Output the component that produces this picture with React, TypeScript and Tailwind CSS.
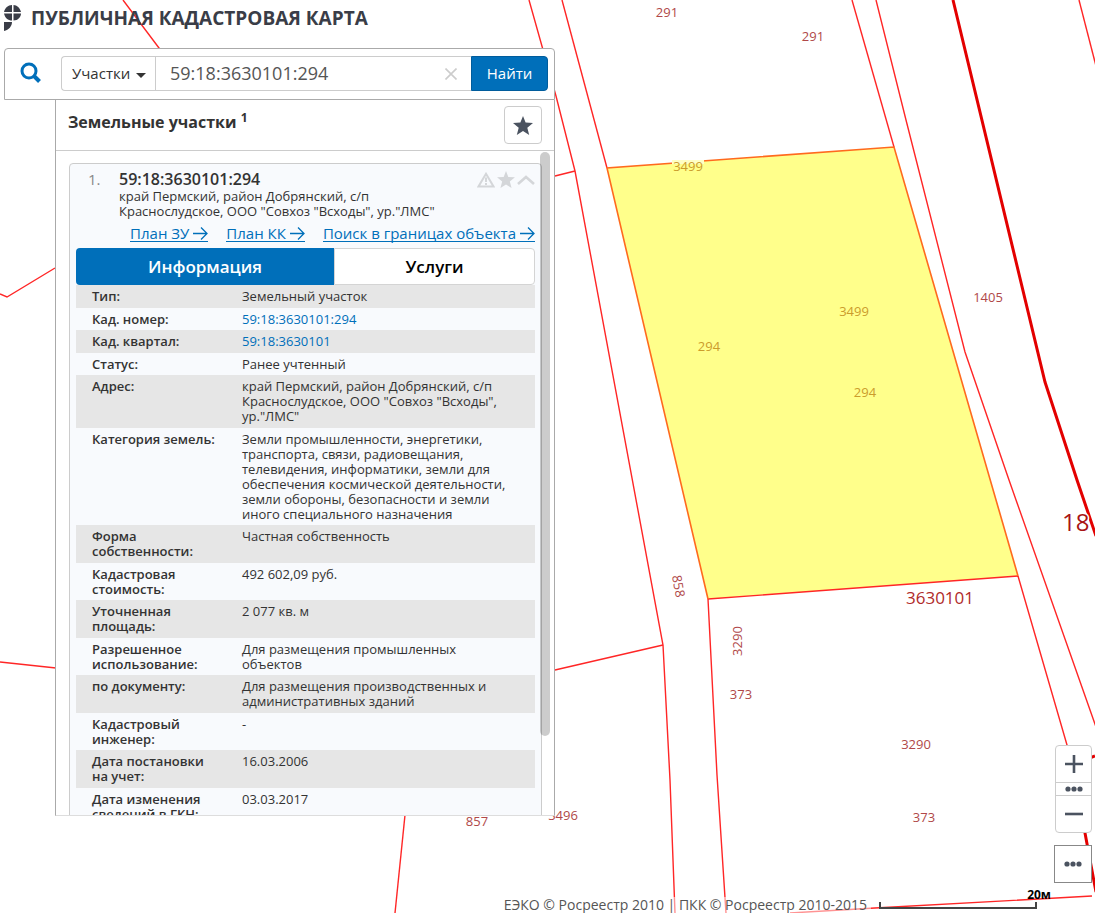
import { useState } from "react";

type MapLabel = {
  text: string;
  x: number;
  y: number;
  rotate?: number;
  selected?: boolean;
};

type Row = {
  label: string;
  value: string;
  href?: string;
};

const boundaries = [
  "M123 0 L159 48 L200 103",
  "M529 0 L556 96 L575 171 L663 645 L670 780 L675 913",
  "M555 176 L575 171",
  "M562 0 L607 168",
  "M852 0 L894 147",
  "M876 0 L906 120 L965 352 L1009 480 L1096 727",
  "M1079 0 L1096 66",
  "M708 599 L717 775 L726 913",
  "M1018 576 L1067 745 L1085 812",
  "M555 670 L663 645",
  "M55 268 L7 297 L0 294",
  "M0 662 L56 668",
  "M405 815 L395 913",
  "M790 913 L875 908 L1092 896",
];

const quarterBoundaries = [
  "M953 0 L1045 382 L1077 480 L1096 536",
  "M1070 766 L1095 756",
  "M1078 790 L1085 833 L1096 892",
];

const labels: MapLabel[] = [
  { text: "291", x: 667, y: 17 },
  { text: "291", x: 813, y: 41 },
  { text: "1405", x: 988, y: 302 },
  { text: "3499", x: 688, y: 171, selected: true },
  { text: "3499", x: 854, y: 316, selected: true },
  { text: "294", x: 709, y: 351, selected: true },
  { text: "294", x: 865, y: 397, selected: true },
  { text: "858", x: 674, y: 587, rotate: 80 },
  { text: "3290", x: 742, y: 641, rotate: -90 },
  { text: "373", x: 741, y: 699 },
  { text: "3290", x: 916, y: 749 },
  { text: "373", x: 924, y: 822 },
  { text: "857", x: 477, y: 826 },
  { text: "3496", x: 563, y: 820 },
];

const rows: Row[] = [
  { label: "Тип:", value: "Земельный участок" },
  { label: "Кад. номер:", value: "59:18:3630101:294", href: "#parcel" },
  { label: "Кад. квартал:", value: "59:18:3630101", href: "#quarter" },
  { label: "Статус:", value: "Ранее учтенный" },
  {
    label: "Адрес:",
    value: 'край Пермский, район Добрянский, с/п Краснослудское, ООО "Совхоз "Всходы", ур."ЛМС"',
  },
  {
    label: "Категория земель:",
    value:
      "Земли промышленности, энергетики, транспорта, связи, радиовещания, телевидения, информатики, земли для обеспечения космической деятельности, земли обороны, безопасности и земли иного специального назначения",
  },
  { label: "Форма собственности:", value: "Частная собственность" },
  { label: "Кадастровая стоимость:", value: "492 602,09 руб." },
  { label: "Уточненная площадь:", value: "2 077 кв. м" },
  { label: "Разрешенное использование:", value: "Для размещения промышленных объектов" },
  { label: "по документу:", value: "Для размещения производственных и административных зданий" },
  { label: "Кадастровый инженер:", value: "-" },
  { label: "Дата постановки на учет:", value: "16.03.2006" },
  { label: "Дата изменения сведений в ГКН:", value: "03.03.2017" },
];

function Star({ className }: { className: string }) {
  return (
    <svg aria-hidden="true" className={className} fill="currentColor" viewBox="0 0 20 19">
      <path d="M10 0 L12.6 6.6 L20 7.1 L14.3 11.7 L16.2 19 L10 15 L3.8 19 L5.7 11.7 L0 7.1 L7.4 6.6 Z" />
    </svg>
  );
}

function Dots() {
  return (
    <svg aria-hidden="true" className="h-[6px] w-[18px]" fill="#4b5360" viewBox="0 0 18 6">
      <circle cx="3" cy="3" r="2.6" />
      <circle cx="9" cy="3" r="2.6" />
      <circle cx="15" cy="3" r="2.6" />
    </svg>
  );
}

function PlanLink({ children }: { children: string }) {
  return (
    <a className="flex items-center gap-1 border-[#006fba] border-b text-[#006fba] leading-4" href="#plan">
      {children}
      <svg
        aria-hidden="true"
        className="h-[13px] w-[15px]"
        fill="none"
        stroke="currentColor"
        strokeWidth="1.3"
        viewBox="0 0 15 13"
      >
        <path d="M0 6.5 H14 M8 0.5 L14 6.5 L8 12.5" />
      </svg>
    </a>
  );
}

function CadastralMap() {
  return (
    <svg aria-label="Карта участков" className="absolute inset-0 h-full w-full" role="img">
      <polygon fill="#ffff8b" points="607,168 894,147 1018,576 708,599" />
      <g fill="none" stroke="#ff2626" strokeWidth="1.4">
        {boundaries.map((d) => (
          <path d={d} key={d} />
        ))}
        <path d="M708 599 L1018 576" />
      </g>
      <path
        d="M708 599 L607 168 L894 147 L1018 576"
        fill="none"
        stroke="#ff6a1e"
        strokeWidth="1.6"
      />
      <g fill="none" stroke="#e30000" strokeWidth="3">
        {quarterBoundaries.map((d) => (
          <path d={d} key={d} />
        ))}
      </g>
      <rect fill="#ffffc4" height="4" width="32" x="672" y="160" />
      <g fontSize="13" textAnchor="middle">
        {labels.map(({ text, x, y, rotate = 0, selected }) => (
          <text
            fill={selected ? "#cb9c2c" : "#b04848"}
            key={`${text}-${x}`}
            transform={`rotate(${rotate} ${x} ${y})`}
            x={x}
            y={y}
          >
            {text}
          </text>
        ))}
      </g>
      <text fill="#b02a2a" fontSize="17" textAnchor="middle" x="940" y="604">
        3630101
      </text>
      <text fill="#a81414" fontSize="24" paintOrder="stroke" stroke="#fff" strokeWidth="3" x="1062" y="531">
        18
      </text>
    </svg>
  );
}

function SearchBar() {
  const [query, setQuery] = useState("59:18:3630101:294");

  return (
    <form
      className="flex h-[52px] items-start rounded-t-sm border border-[#aaa] bg-white pt-[7px] pr-[6px] pl-[15px]"
      onSubmit={(e) => e.preventDefault()}
    >
      <svg
        aria-hidden="true"
        className="mt-[6px] mr-5 h-[21px] w-[21px] shrink-0"
        fill="none"
        stroke="#006fba"
        viewBox="0 0 21 21"
      >
        <circle cx="9" cy="9" r="7" strokeWidth="3" />
        <path d="M14 14 L19.5 19.5" strokeWidth="4" />
      </svg>
      <div className="flex h-[35px] min-w-0 flex-1 items-stretch rounded-l-sm border border-[#ccc] border-r-0">
        <div className="relative flex border-[#ccc] border-r">
          <select
            aria-label="Тип объекта"
            className="w-[93px] appearance-none bg-transparent pl-[10px] text-[#333] text-[15px] outline-none"
          >
            <option>Участки</option>
            <option>ОКС</option>
          </select>
          <svg
            aria-hidden="true"
            className="pointer-events-none absolute top-4 right-[9px] h-[5px] w-[10px]"
            fill="#333"
            viewBox="0 0 10 5"
          >
            <path d="M0 0 H10 L5 5 Z" />
          </svg>
        </div>
        <input
          aria-label="Кадастровый номер"
          className="min-w-0 flex-1 pl-[14px] text-[#555] text-[18px] outline-none"
          onChange={(e) => setQuery(e.target.value)}
          type="text"
          value={query}
        />
        <button aria-label="Очистить" className="px-[14px]" onClick={() => setQuery("")} type="button">
          <svg aria-hidden="true" className="h-3 w-3" stroke="#ccc" strokeWidth="1.6" viewBox="0 0 12 12">
            <path d="M0.5 0.5 L11.5 11.5 M11.5 0.5 L0.5 11.5" />
          </svg>
        </button>
      </div>
      <button
        className="h-[35px] w-[77px] rounded-r-sm border border-[#005c9c] bg-[#006fba] font-medium text-[15px] text-white"
        type="submit"
      >
        Найти
      </button>
    </form>
  );
}

function ParcelCard() {
  const [tab, setTab] = useState("info");

  return (
    <article className="rounded-t-sm border border-[#ccc] bg-[#f8fafd] px-[6px] pt-[7px]">
      <div className="flex items-start">
        <span className="w-[43px] pl-3 text-[#888] text-[15px] leading-4">1.</span>
        <div className="flex-1 pr-5 text-[13px] text-[#333] leading-[15px]">
          <h3 className="mb-[2px] font-semibold text-[16px] leading-4">59:18:3630101:294</h3>
          <p>край Пермский, район Добрянский, с/п Краснослудское, ООО "Совхоз "Всходы", ур."ЛМС"</p>
        </div>
        <div className="flex items-center gap-[2px] text-[#d4d6d9]">
          <svg
            aria-hidden="true"
            className="h-4 w-[18px]"
            fill="none"
            stroke="currentColor"
            strokeWidth="2"
            viewBox="0 0 18 16"
          >
            <path d="M9 1.8 L16.5 14.5 H1.5 Z M9 5.5 V10 M9 11 V13" />
          </svg>
          <Star className="h-[17px] w-[18px]" />
          <svg
            aria-hidden="true"
            className="h-[10px] w-[18px]"
            fill="none"
            stroke="currentColor"
            strokeWidth="2.6"
            viewBox="0 0 18 10"
          >
            <path d="M1 9 L9 2 L17 9" />
          </svg>
        </div>
      </div>

      <div className="mt-[6px] mb-[6px] flex justify-end gap-[18px] whitespace-nowrap text-[15px]">
        <PlanLink>План ЗУ</PlanLink>
        <PlanLink>План КК</PlanLink>
        <PlanLink>Поиск в границах объекта</PlanLink>
      </div>

      <div className="flex h-[37px] font-bold text-[17px]">
        <button
          className="w-[258px] rounded-l-sm bg-[#006fba] font-semibold text-white"
          onClick={() => setTab("info")}
          type="button"
        >
          Информация
        </button>
        <button
          className="flex-1 rounded-r-sm border border-[#d4d4d4] bg-white font-semibold text-black"
          onClick={() => setTab("services")}
          type="button"
        >
          Услуги
        </button>
      </div>

      {tab === "info" && (
        <table className="w-full table-fixed text-left text-[#333] text-[13px] leading-[15px]">
          <tbody>
            {rows.map((row) => (
              <tr className="group align-top odd:bg-[#e6e6e6]" key={row.label}>
                <th
                  className="w-[166px] pt-1 pr-6 pb-[3px] pl-4 font-semibold group-odd:pb-1"
                  scope="row"
                >
                  {row.label}
                </th>
                <td className="pt-1 pr-5 pb-[3px] group-odd:pb-1">
                  {row.href ? (
                    <a className="text-[#006fba]" href={row.href}>
                      {row.value}
                    </a>
                  ) : (
                    row.value
                  )}
                </td>
              </tr>
            ))}
          </tbody>
        </table>
      )}
    </article>
  );
}

function Results() {
  return (
    <section className="relative ml-[51px] flex min-h-0 flex-1 flex-col border-[#aaa] border-x border-b border-b-[#ddd] bg-white">
      <header className="flex h-[51px] shrink-0 items-center justify-between border-[#ccc] border-b pr-3 pl-3">
        <h2 className="mb-[6px] font-bold text-[#333] text-[16px]">
          Земельные участки <sup className="text-[12px]">1</sup>
        </h2>
        <button
          aria-label="Избранное"
          className="flex h-[38px] w-[38px] items-center justify-center rounded-sm border border-[#ccc] text-[#4b5360]"
          type="button"
        >
          <Star className="h-[19px] w-5" />
        </button>
      </header>
      <div className="relative min-h-0 flex-1 overflow-hidden px-3 pt-3 pl-[13px]">
        <ParcelCard />
        <div className="absolute top-px right-1 h-[88%] w-[10px] rounded-full bg-black/20" />
      </div>
    </section>
  );
}

function ZoomControls() {
  return (
    <div className="absolute right-[3px] bottom-[30px] flex flex-col items-end gap-3">
      <div className="flex w-[37px] flex-col divide-y divide-[#ccc] rounded-sm border border-[#ccc] bg-white">
        <button aria-label="Приблизить" className="flex h-[37px] items-center justify-center" type="button">
          <svg aria-hidden="true" className="h-[18px] w-[18px]" stroke="#4b5360" strokeWidth="2.6" viewBox="0 0 18 18">
            <path d="M9 0 V18 M0 9 H18" />
          </svg>
        </button>
        <button aria-label="Масштаб" className="flex h-[13px] items-center justify-center" type="button">
          <Dots />
        </button>
        <button aria-label="Отдалить" className="flex h-9 items-center justify-center" type="button">
          <svg aria-hidden="true" className="h-[18px] w-[18px]" stroke="#4b5360" strokeWidth="2.6" viewBox="0 0 18 18">
            <path d="M0 9 H18" />
          </svg>
        </button>
      </div>
      <button
        aria-label="Ещё"
        className="flex h-[38px] w-[38px] items-center justify-center border border-[#888] bg-white"
        type="button"
      >
        <Dots />
      </button>
    </div>
  );
}

export default function App() {
  return (
    <div className="relative flex h-screen flex-col overflow-hidden bg-white font-['Open_Sans','Noto_Sans',sans-serif]">
      <CadastralMap />

      <header className="relative flex h-12 shrink-0 items-start gap-[10px] pt-[5px] pl-1">
        <svg aria-hidden="true" className="h-[26px] w-[17px]" fill="#3a3d47" viewBox="0 0 17 26">
          <path d="M8 0 V7 H0 C1 3 4 0 8 0 Z M9.5 0 C13 0 16 3 17 7 H9.5 Z M0 8.5 H8 V15.5 C4 15.5 1 13 0 8.5 Z M9.5 8.5 H17 C17 12 14 15.5 9.5 15.5 Z M0 17 H8 C8 21 5 25 0 26 Z" />
        </svg>
        <h1 className="font-bold text-[#3a3d47] text-[19px] leading-[26px]">ПУБЛИЧНАЯ КАДАСТРОВАЯ КАРТА</h1>
      </header>

      <main className="relative mb-[97px] ml-1 flex min-h-0 w-[551px] flex-1 flex-col">
        <SearchBar />
        <Results />
      </main>

      <ZoomControls />

      <footer className="absolute right-[58px] bottom-0 flex h-[18px] items-end gap-2 text-[#555]">
        <p className="bg-white/50 px-1 text-[14px] leading-4">
          ЕЭКО © Росреестр 2010 | ПКК © Росреестр 2010-2015
        </p>
        <div className="relative mb-1 h-[7px] w-[158px] border-[#444] border-x-2 border-b-2">
          <span className="-right-4 -top-4 absolute font-bold text-[12px] text-black leading-[18px]">20м</span>
        </div>
      </footer>
    </div>
  );
}
